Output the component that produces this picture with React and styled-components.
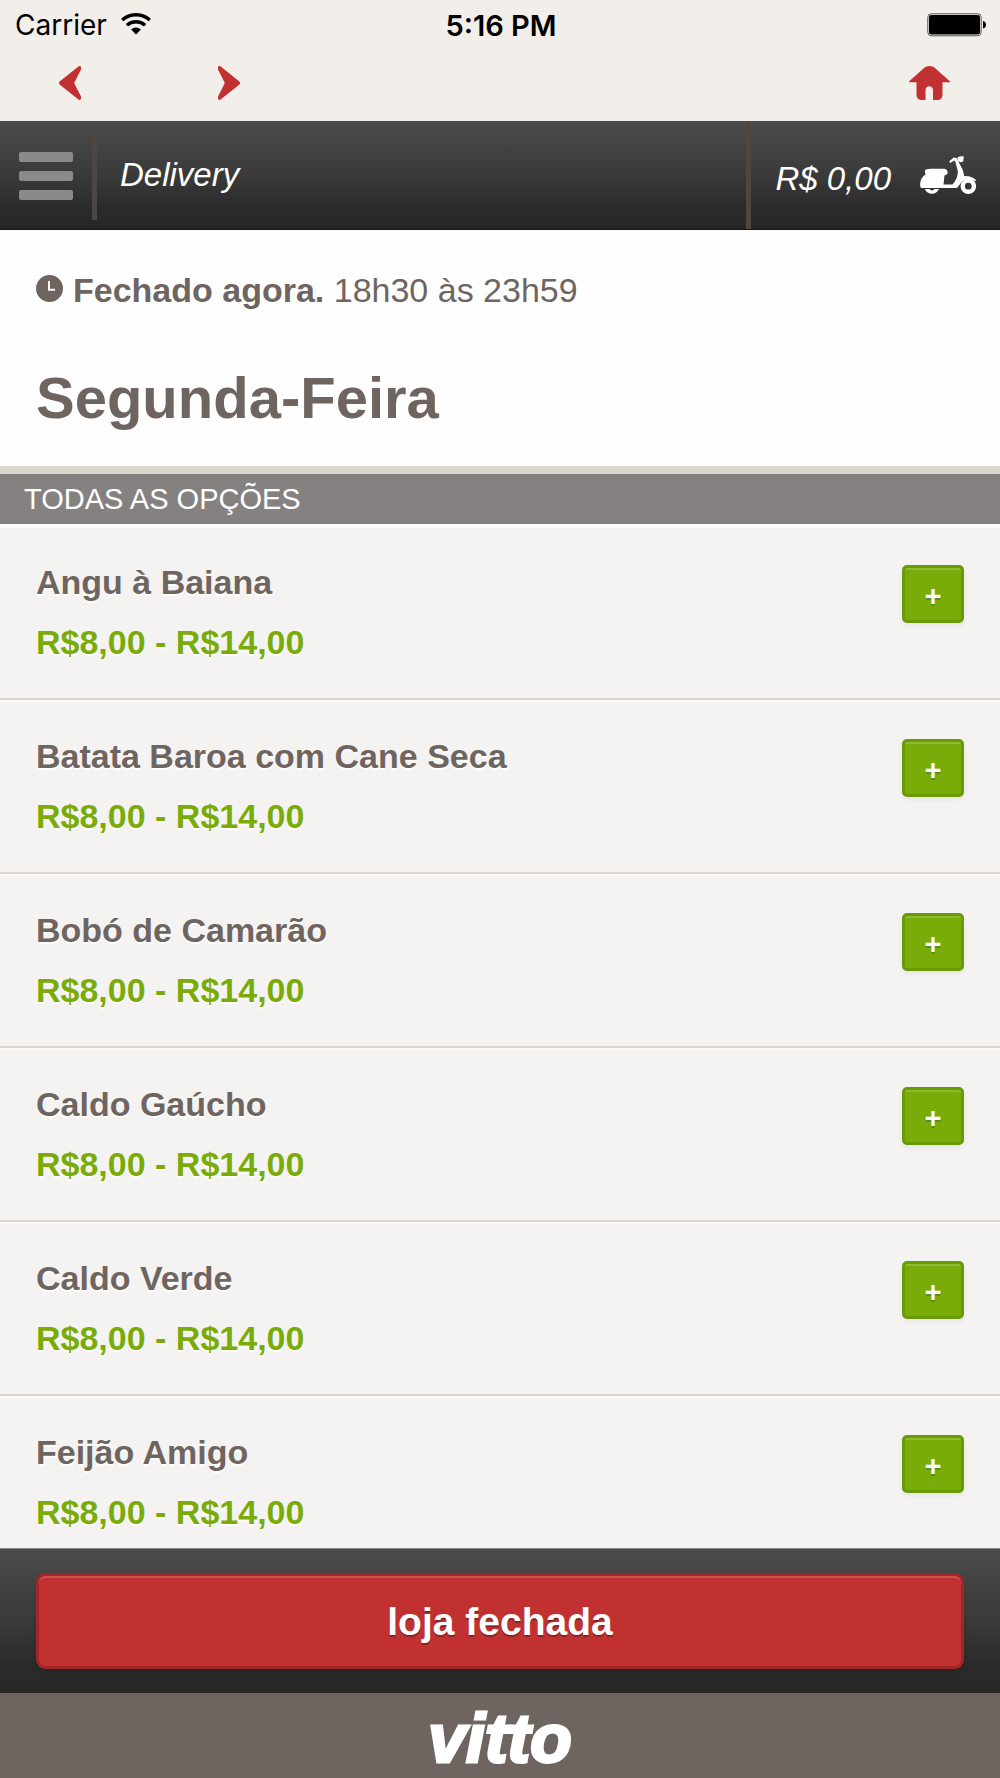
import styled, { createGlobalStyle } from "styled-components";

const colors = {
  chrome: "#f2eeea",
  brand: "#6f6560",
  red: "#c23131",
  redBorder: "#a12626",
  green: "#79ab09",
  greenBorder: "#6b9a07",
  line: "#dcd5ca",
  row: "#f5f3f2",
  section: "#858180",
};

const dishes = [
  "Angu à Baiana",
  "Batata Baroa com Cane Seca",
  "Bobó de Camarão",
  "Caldo Gaúcho",
  "Caldo Verde",
  "Feijão Amigo",
];

export default function App() {
  return (
    <Page>
      <GlobalStyle />
      <StatusBar>
        <Carrier>
          <span>Carrier</span>
          <WifiIcon />
        </Carrier>
        <Clock>5:16 PM</Clock>
        <Battery>
          <BatteryIcon />
        </Battery>
      </StatusBar>
      <BrowserBar>
        <IconButton aria-label="Voltar">
          <ArrowIcon />
        </IconButton>
        <IconButton aria-label="Avançar">
          <ArrowIcon forward />
        </IconButton>
        <HomeLink href="#" aria-label="Início">
          <HomeIcon />
        </HomeLink>
      </BrowserBar>
      <Header>
        <MenuButton aria-label="Menu">
          <span />
          <span />
          <span />
        </MenuButton>
        <Title>Delivery</Title>
        <Cart href="#">
          <span>R$ 0,00</span>
          <ScooterIcon />
        </Cart>
      </Header>
      <Intro>
        <Hours>
          <ClockIcon />
          <p>
            <strong>Fechado agora.</strong> 18h30 às 23h59
          </p>
        </Hours>
        <Day>Segunda-Feira</Day>
      </Intro>
      <SectionTitle>TODAS AS OPÇÕES</SectionTitle>
      <List>
        {dishes.map((dish) => (
          <Row key={dish}>
            <div>
              <Name>{dish}</Name>
              <Price>R$8,00 - R$14,00</Price>
            </div>
            <AddButton aria-label={`Adicionar ${dish}`}>+</AddButton>
          </Row>
        ))}
      </List>
      <Footer>
        <ClosedButton>loja fechada</ClosedButton>
      </Footer>
      <Brand>
        <Logo>vitto</Logo>
      </Brand>
    </Page>
  );
}

function WifiIcon() {
  return (
    <svg width="30" height="22" viewBox="0 0 30 22">
      <g fill="none" stroke="#000" strokeWidth="3.4">
        <path d="M1.200 7a20.600 20.600 0 0 1 27.600 0" />
        <path d="M5.900 12.300a13.400 13.400 0 0 1 18.200 0" />
      </g>
      <path d="M15 21.500l-4.900-5a7.200 7.200 0 0 1 9.800 0z" />
    </svg>
  );
}

function BatteryIcon() {
  return (
    <svg width="60" height="24" viewBox="0 0 60 24">
      <rect
        x="0.8"
        y="0.8"
        width="53.4"
        height="22"
        rx="3.6"
        fill="none"
        stroke="#555"
      />
      <rect x="2" y="2" width="51" height="19.6" rx="2.4" />
      <path d="M56 8c4 .6 4 7 0 7.6z" />
    </svg>
  );
}

function ArrowIcon({ forward }) {
  return (
    <svg width="22" height="34" viewBox="0 0 22 34">
      <path
        fill={colors.red}
        transform={forward ? "matrix(-1 0 0 1 22 0)" : undefined}
        d="M.9 15.2L19.4.5C20.8-.4 22.2.4 22 2v1.400L15.400 16.500V17.500L22 30.600V32c.2 1.600-1.200 2.400-2.600 1.500L.9 18.800c-1.200-1-1.200-2.600 0-3.600z"
      />
    </svg>
  );
}

function HomeIcon() {
  return (
    <svg width="41" height="34" viewBox="0 0 41 34">
      <path
        fill={colors.red}
        d="M14.500 2.400c4-3.200 8-3.200 12 0L40.800 15.300c.4.500.2 1-.4 1H33.500V28.500C33.500 32 31.500 34 28 34H24V24.200c0-5.400-7.500-5.400-7.500 0V34H13C9.500 34 7.500 32 7.500 28.500V16.300H.6c-.6 0-.8-.5-.4-1z"
      />
    </svg>
  );
}

function ScooterIcon() {
  return (
    <svg width="56" height="38" viewBox="0 0 56 38" fill="#fff">
      <path d="M5.500 13.800C7 13 10 12.800 13 12.800H23c3.500 0 4.700 1.600 4.600 4.200 0 1-.6 1.700-1.600 1.700l-1.500.8-1 9H32.500c3.500-4 5.200-8 5.400-13L35.300 5.500 34 4.600 30.500 7l-1.400-1.500L33.600 1.500l3 .6 6.200 12 1.400 5.800c4 0 8.200.6 11.600 4v1.300l-2.600-.6-4-1.400c-4-.6-6 .6-8.200 3.600l-3.600 4.600-1.400.6H1C.2 30.500 0 29.500.2 27 .8 22.500 3 20 5.800 18.200 4.500 17 4.600 14.500 5.500 13.800z" />
      <path d="M37.500 1.200C40 .2 42 .1 43.800.2l-.6 5.300-2.400.7-3-1.200z" />
      <path d="M4.800 33h4.600c1 1.900 4 1.900 5 0H19c-2.400 6.400-11.800 6.400-14.200 0z" />
      <circle cx="48.300" cy="30.200" r="5.600" fill="none" stroke="#fff" strokeWidth="4.400" />
    </svg>
  );
}

function ClockIcon() {
  return (
    <svg width="27" height="27" viewBox="0 0 27 27">
      <circle cx="13.500" cy="13.500" r="13.500" fill={colors.brand} />
      <path d="M13 6V14.800H19" fill="none" stroke="#fff" strokeWidth="2" />
    </svg>
  );
}

const GlobalStyle = createGlobalStyle`
  * {
    box-sizing: border-box;
  }
  body {
    margin: 0;
    font-family: "Liberation Sans", Arial, Helvetica, sans-serif;
    color: ${colors.brand};
  }
  h1, h2, h3, p, ul {
    margin: 0;
    padding: 0;
  }
  button {
    padding: 0;
    border: 0;
    background: none;
    font-family: inherit;
    cursor: pointer;
  }
  svg {
    display: block;
  }
`;
const Page = styled.div`
  height: 100vh;
  display: flex;
  flex-direction: column;
  background-color: ${colors.row};
  overflow: hidden;
`;
const StatusBar = styled.div`
  flex: none;
  display: grid;
  grid-template-columns: 1fr auto 1fr;
  align-items: center;
  height: 50px;
  padding: 0 13px 0 15px;
  background-color: ${colors.chrome};
  color: black;
  font-family: Inter, "Liberation Sans", sans-serif;
  font-size: 28px;
`;
const Carrier = styled.div`
  display: flex;
  align-items: center;
  gap: 14px;
  svg {
    margin-bottom: 3px;
  }
`;
const Clock = styled.span`
  font-size: 29px;
  font-weight: 600;
`;
const Battery = styled.div`
  display: flex;
  justify-content: flex-end;
`;
const BrowserBar = styled.nav`
  flex: none;
  display: flex;
  align-items: center;
  gap: 137px;
  height: 71px;
  padding: 0 50px 6px 59px;
  background-color: ${colors.chrome};
`;
const IconButton = styled.button`
  display: block;
`;
const HomeLink = styled.a`
  margin-left: auto;
`;
const Header = styled.header`
  flex: none;
  display: flex;
  align-items: stretch;
  height: 109px;
  background-image: linear-gradient(#4b4b4b, #3a3a3a 50%, #2b2b2b 80%, #252525);
  border-bottom: 1px solid #161616;
  color: white;
  font-size: 33px;
  font-style: italic;
`;
const MenuButton = styled.button`
  display: flex;
  flex-direction: column;
  justify-content: center;
  gap: 9px;
  margin: 12px 0 9px;
  padding: 0 19px 1px;
  border-right: 5px solid #4e4641;
  span {
    width: 54px;
    height: 10px;
    border-radius: 2px;
    background-color: #8a8a8a;
  }
`;
const Title = styled.h1`
  flex: 1;
  align-self: center;
  padding: 0 23px 1px;
  font-size: inherit;
  font-weight: 400;
`;
const Cart = styled.a`
  display: flex;
  align-items: center;
  gap: 29px;
  padding: 8px 24px 0;
  border-left: 5px solid #4e4641;
  color: inherit;
  text-decoration: none;
  svg {
    margin-bottom: 8px;
  }
`;
const Intro = styled.section`
  flex: none;
  padding: 42px 36px 35px;
  background-color: #fefefe;
  border-bottom: 8px solid ${colors.line};
`;
const Hours = styled.div`
  display: flex;
  align-items: center;
  gap: 10px;
  font-size: 34px;
  line-height: 36px;
  svg {
    margin-bottom: 4px;
  }
`;
const Day = styled.h2`
  margin-top: 57px;
  font-size: 58px;
  line-height: 66px;
`;
const SectionTitle = styled.h3`
  flex: none;
  padding: 1px 24px 0;
  background-color: ${colors.section};
  border-bottom: 2px solid white;
  color: white;
  font-size: 29px;
  font-weight: 400;
  line-height: 49px;
`;
const List = styled.ul`
  flex: 1;
  min-height: 0;
  overflow: hidden;
  list-style: none;
`;
const Row = styled.li`
  display: flex;
  justify-content: space-between;
  align-items: flex-start;
  padding: 39px 36px;
  border-bottom: 2px solid ${colors.line};
  box-shadow: inset 0 2px #faf9f8;
  font-size: 34px;
  font-weight: 700;
  line-height: 34px;
  text-shadow: 0 2px white;
`;
const Name = styled.p``;
const Price = styled.p`
  margin-top: 26px;
  color: ${colors.green};
`;
const AddButton = styled.button`
  width: 62px;
  height: 58px;
  padding-top: 4px;
  border: 3px solid ${colors.greenBorder};
  border-radius: 5px;
  background-color: ${colors.green};
  box-shadow:
    inset 0 2px #8fba34,
    0 3px 5px rgba(0, 0, 0, 0.06);
  color: white;
  font-size: 29px;
  font-weight: 700;
  text-shadow: 0 2px #4f8f2f;
`;
const Footer = styled.footer`
  flex: none;
  padding: 24px 36px;
  background-image: linear-gradient(#4b4b4b, #3a3a3a 50%, #2b2b2b 80%, #282828);
  border-top: 1px solid #8a8a8a;
`;
const ClosedButton = styled.button`
  width: 100%;
  height: 96px;
  padding-top: 2px;
  border: 3px solid ${colors.redBorder};
  border-radius: 9px;
  background-color: ${colors.red};
  box-shadow:
    inset 0 2px #cd5151,
    0 2px 5px rgba(0, 0, 0, 0.15);
  color: white;
  font-size: 39px;
  font-weight: 700;
  text-shadow: 0 2px #8a2323;
`;
const Brand = styled.div`
  flex: none;
  display: flex;
  justify-content: center;
  height: 85px;
  background-color: ${colors.brand};
`;
const Logo = styled.span`
  color: white;
  font-size: 68px;
  font-style: italic;
  font-weight: 700;
  line-height: 91px;
  -webkit-text-stroke: 3px white;
`;
